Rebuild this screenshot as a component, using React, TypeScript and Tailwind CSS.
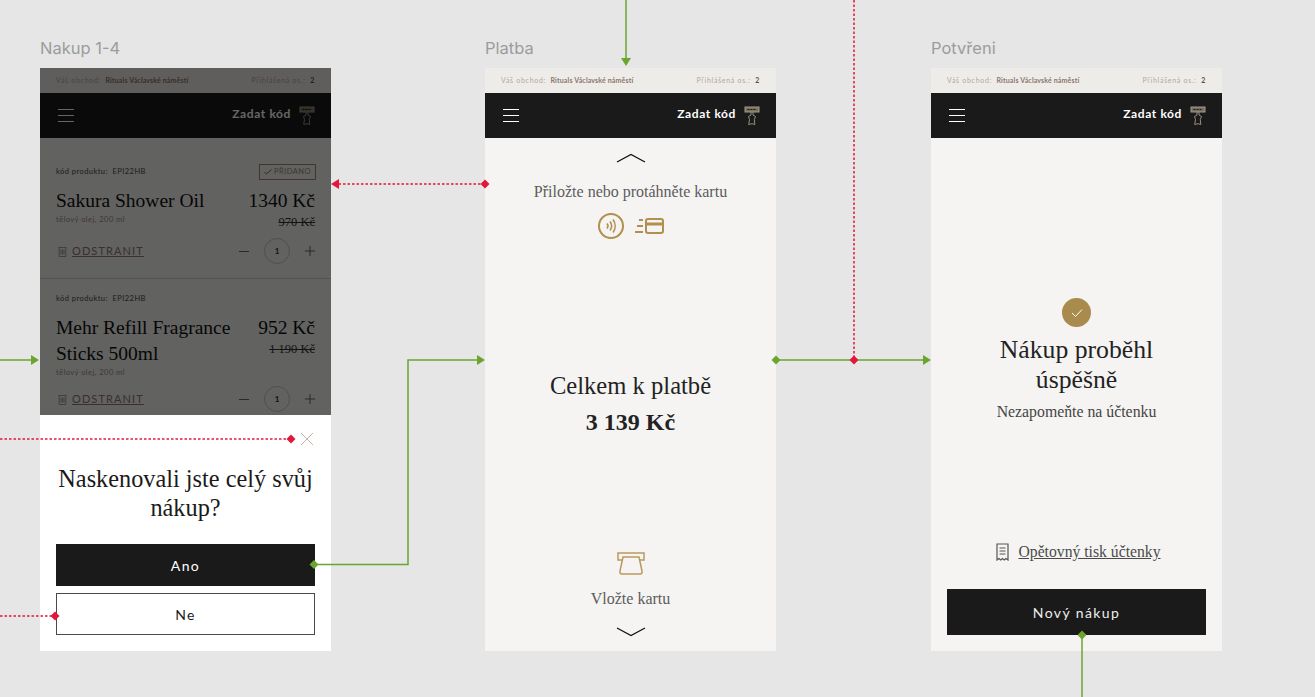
import React from 'react';

const serif = 'font-["Liberation_Serif",serif]';
const sans = 'font-["Lato",sans-serif]';

const StampIcon = () => (
  <svg width="16" height="20" viewBox="0 0 16 20" fill="none" className="text-[#a29a8b]">
    <rect x="1" y="1" width="14" height="5" fill="#77705f" stroke="currentColor" />
    <path d="M3.500 3.500h9" stroke="#1a1a1a" strokeDasharray="2 1" />
    <path d="M7 6v3l-2.500 1.500 1 3-.8 5 3.300-.8 2.800.8-.5-5 1.200-3L9 9V6" stroke="currentColor" strokeWidth="0.9" />
  </svg>
);

const Header = () => (
  <>
    <div className={`flex h-[25px] items-center justify-between bg-[#eeece8] px-4 text-[7px] tracking-[0.1em] text-[#b5a59c] ${sans}`}>
      <div>
        Váš obchod: <span className="ml-[2px] font-bold tracking-[0.02em] text-[#8d766c]">Rituals Václavské náměstí</span>
      </div>
      <div>
        Přihlášená os.: <span className="ml-[2px] font-bold text-[#5d4c44]">2</span>
      </div>
    </div>
    <div className="flex h-[45px] items-center justify-between bg-[#1a1a1a] pl-[18px] pr-4">
      <div className="flex w-4 flex-col gap-[5px]">
        <div className="h-px bg-white" />
        <div className="h-px bg-white" />
        <div className="h-px bg-white" />
      </div>
      <div className="flex items-center gap-2">
        <span className={`-mt-[3px] text-[12px] font-bold tracking-[0.05em] text-white ${sans}`}>Zadat kód</span>
        <StampIcon />
      </div>
    </div>
  </>
);

const Trash = () => (
  <svg width="9" height="11" viewBox="0 0 9 11" fill="none" stroke="#8a8a8a" strokeWidth="0.8">
    <path d="M0.500 1.500h8M1.200 1.500v9h6.600v-9M3 3.500v5M4.500 3.500v5M6 3.500v5" />
  </svg>
);

type ProductProps = {
  name: React.ReactNode;
  price: string;
  old: string;
  added?: boolean;
};

const Product = ({ name, price, old, added }: ProductProps) => (
  <div className="px-4">
    <div className="flex h-[19px] items-center justify-between">
      <span className={`text-[7.5px] tracking-[0.06em] text-[#4c4c4c] ${sans}`}>kód produktu: &nbsp;EPI22HB</span>
      {added && (
        <span className={`-mr-px flex h-4 w-[57px] items-center justify-center gap-[2px] border border-[#a58578] text-[7.5px] tracking-[0.06em] text-[#a08a80] ${sans}`}>
          <svg width="8" height="6" viewBox="0 0 8 6" fill="none" stroke="#80706a">
            <path d="M0.500 3l2 2 5-4.500" />
          </svg>
          PŘIDANO
        </span>
      )}
    </div>
    <div className={`mt-[7px] flex justify-between text-[#111] ${serif}`}>
      <div>
        <div className="w-[190px] text-[19.5px] leading-[26px]">{name}</div>
        <div className={`text-[7.5px] leading-3 tracking-[0.06em] text-[#a08a80] ${sans}`}>tělový olej, 200 ml</div>
      </div>
      <div className="text-right">
        <div className="text-[19.5px] leading-[26px]">{price}</div>
        <div className="mt-px text-[12.5px] leading-[15px] text-[#333] line-through">{old}</div>
      </div>
    </div>
  </div>
);

const ProductActions = () => (
  <div className="flex items-center justify-between">
    <div className={`flex items-center gap-[5px] pl-[2px] text-[11px] tracking-[0.1em] text-[#8e7670] underline ${sans}`}>
      <Trash />
      ODSTRANIT
    </div>
    <div className={`flex items-center gap-[15px] text-[#333] ${sans}`}>
      <div className="h-px w-[10px] bg-[#666]" />
      <div className="flex h-[26px] w-[26px] items-center justify-center rounded-full border border-[#c8c8c8] text-[8px] font-bold">1</div>
      <svg width="10" height="10" viewBox="0 0 10 10" stroke="#666" strokeWidth="1">
        <path d="M5 0v10M0 5h10" />
      </svg>
    </div>
  </div>
);

const CartFrame = () => (
  <div className="absolute left-[40px] top-[68px] h-[583px] w-[291px] overflow-hidden bg-[#f5f4f2]">
    <Header />
    <div className="h-[141px] border-b border-[#d0d0d0] pt-6">
      <Product added name="Sakura Shower Oil" price="1340 Kč" old="970 Kč" />
      <div className="mt-2 px-4">
        <ProductActions />
      </div>
    </div>
    <div className="pt-[10px]">
      <Product name="Mehr Refill Fragrance Sticks 500ml" price="952 Kč" old="1 190 Kč" />
      <div className="mt-[7px] px-4">
        <ProductActions />
      </div>
    </div>
    <div className="absolute inset-0 bg-black/60" />
    <div className="absolute inset-x-0 bottom-0 h-[236px] bg-white px-4">
      <div className="flex justify-end pr-[2px] pt-[18px]">
        <svg width="12" height="12" viewBox="0 0 12 12" stroke="#c0b2a8" strokeWidth="1">
          <path d="M0 0l12 12M12 0L0 12" />
        </svg>
      </div>
      <h2 className={`mt-[19px] text-center text-[24.3px] font-normal leading-[29px] text-[#1a1a1a] ${serif}`}>
        Naskenovali jste celý svůj nákup?
      </h2>
      <button className={`mt-[22px] h-[42px] w-full bg-[#1a1a1a] text-[14px] tracking-[0.1em] text-white ${sans}`}>Ano</button>
      <button className={`mt-[7px] h-[42px] w-full border border-[#4a4a4a] bg-white text-[14px] tracking-[0.1em] text-[#1a1a1a] ${sans}`}>Ne</button>
    </div>
  </div>
);

const ChevronUp = () => (
  <svg width="30" height="10" viewBox="0 0 30 10" fill="none" stroke="#111" strokeWidth="1.300">
    <path d="M1 9L15 1.500 29 9" />
  </svg>
);

const PayFrame = () => (
  <div className="absolute left-[485px] top-[68px] flex h-[583px] w-[291px] flex-col bg-[#f5f4f2]">
    <Header />
    <div className={`flex flex-1 flex-col items-center text-[#5c5c5c] ${serif}`}>
      <div className="mt-[15px]">
        <ChevronUp />
      </div>
      <div className="mt-[19px] text-[16px] leading-[20px]">Přiložte nebo protáhněte kartu</div>
      <div className="mt-[11px] flex items-center gap-[11px]">
        <svg width="26" height="26" viewBox="0 0 26 26" fill="none" stroke="#b08f4f" strokeWidth="2">
          <circle cx="13" cy="13" r="12" />
          <path d="M9 10.500a4 4 0 010 5M12 8.500a7.500 7.500 0 010 9M15 6.500a11 11 0 010 13" strokeWidth="1.600" />
        </svg>
        <svg width="29" height="16" viewBox="0 0 29 16" fill="none" stroke="#b08f4f" strokeWidth="2">
          <rect x="11" y="1" width="17" height="14" rx="2" />
          <path d="M11 6h17" strokeWidth="3" />
          <path d="M4 2h4M2 8h6M0 14h8" />
        </svg>
      </div>
      <div className="mt-[130px] text-[24.6px] leading-[33px] text-[#222]">Celkem k platbě</div>
      <div className="mt-1 text-[24px] font-bold leading-[33px] text-[#222]">3 139 Kč</div>
      <div className="mt-[113px]">
        <svg width="28" height="23" viewBox="0 0 28 23" fill="none" stroke="#b9995c" strokeWidth="1.500">
          <path d="M1 1h26v7H1z" />
          <path d="M6 5h16l3 14q.500 3-2 3H5q-2.500 0-2-3z" fill="#f5f4f2" />
        </svg>
      </div>
      <div className="mt-[14px] text-[16px] leading-[20px]">Vložte kartu</div>
      <div className="mt-[18px] rotate-180">
        <ChevronUp />
      </div>
    </div>
  </div>
);

const DoneFrame = () => (
  <div className="absolute left-[931px] top-[68px] flex h-[583px] w-[291px] flex-col bg-[#f5f4f2]">
    <Header />
    <div className={`flex flex-1 flex-col items-center ${serif}`}>
      <div className="mt-[160px] flex h-[29px] w-[29px] items-center justify-center rounded-full bg-[#a98b4d]">
        <svg width="12" height="10" viewBox="0 0 12 10" fill="none" stroke="#fff" strokeWidth="1">
          <path d="M1 5l3.500 3.500L11 1.500" />
        </svg>
      </div>
      <h2 className="mt-[8px] w-[200px] text-center text-[25.7px] font-normal leading-[30px] text-[#222]">Nákup proběhl úspěšně</h2>
      <div className="mt-[7px] text-[15.8px] leading-[20px] text-[#444]">Nezapomeňte na účtenku</div>
      <div className="ml-1 mt-[120px] flex items-center gap-[9px]">
        <svg width="13" height="18" viewBox="0 0 13 18" fill="none" stroke="#555" strokeWidth="1.200">
          <path d="M1 1h11v16l-2-1.500-1.800 1.500-1.700-1.500L4.800 17 3 15.500 1 17zM3.500 5h6M3.500 8h6M3.500 11h6" />
        </svg>
        <span className="text-[15.7px] leading-[20px] text-[#4a4a4a] underline">Opětovný tisk účtenky</span>
      </div>
      <button className={`mt-[27px] h-[46px] w-[259px] bg-[#1a1a1a] text-[14px] tracking-[0.1em] text-[#eee] ${sans}`}>Nový nákup</button>
    </div>
  </div>
);

// prototype links drawn over the frames
const Connectors = () => {
  const green = '#6ca52e';
  const red = '#e2173b';
  const dot = (x: number, y: number, c: string) => (
    <path d={`M${x - 4.500} ${y}L${x} ${y - 4.500} ${x + 4.500} ${y} ${x} ${y + 4.500}z`} fill={c} stroke="none" />
  );
  return (
    <svg width="1315" height="697" viewBox="0 0 1315 697" fill="none" className="pointer-events-none absolute left-0 top-0">
      <g stroke={green} strokeWidth="1.500">
        <path d="M626 0v60" />
        <path d="M0 360h34" />
        <path d="M314 564.500h94V360h72" />
        <path d="M776 360h150" />
        <path d="M1082 635v62" />
      </g>
      <g fill={green}>
        <path d="M621 58h10l-5 8z" />
        <path d="M31 355v10l8-5z" />
        <path d="M477 355v10l8-5z" />
        <path d="M923 355v10l8-5z" />
      </g>
      {dot(314, 564.500, green)}
      {dot(776, 360, green)}
      {dot(1082, 635, green)}
      <g stroke={red} strokeWidth="1.500" strokeDasharray="2.500 2">
        <path d="M854 0v360" />
        <path d="M0 439h291" />
        <path d="M0 616h55" />
        <path d="M485 184H338" />
      </g>
      <path d="M339 179v10l-8-5z" fill={red} />
      {dot(854, 360, red)}
      {dot(291, 439, red)}
      {dot(55, 616, red)}
      {dot(485, 184, red)}
    </svg>
  );
};

export default function App() {
  const labelClass = 'absolute top-[39px] text-[16.5px] leading-[19px] text-[#9c9c9c] font-["Inter",sans-serif]';
  return (
    <div className="relative h-[697px] w-[1315px] overflow-hidden bg-[#e6e6e6]">
      <div className={`${labelClass} left-[40px]`}>Nakup 1-4</div>
      <div className={`${labelClass} left-[485px]`}>Platba</div>
      <div className={`${labelClass} left-[931px]`}>Potvřeni</div>
      <CartFrame />
      <PayFrame />
      <DoneFrame />
      <Connectors />
    </div>
  );
}
